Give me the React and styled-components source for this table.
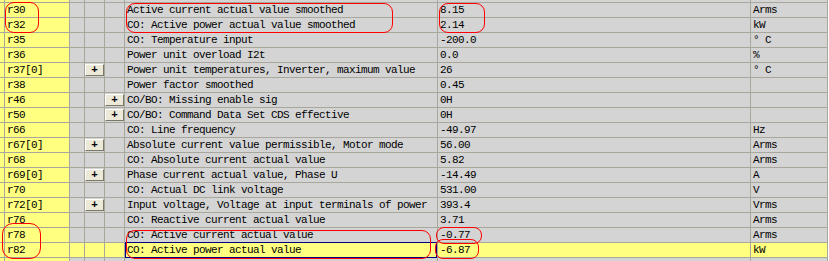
import React from "react";
import styled, { createGlobalStyle, css } from "styled-components";

const GlobalStyle = createGlobalStyle`
  html, body {
    margin: 0;
    padding: 0;
    background: #ffffff;
    overflow: hidden;
  }
`;

const YELLOW = "#ffff80";
const GREY = "#d4d4d4";
const LINE = "#a8a79c";

const rows = [
  { id: "", desc: "", value: "", unit: "" },
  { id: "r30", desc: "Active current actual value smoothed", value: "8.15", unit: "Arms" },
  { id: "r32", desc: "CO: Active power actual value smoothed", value: "2.14", unit: "kW" },
  { id: "r35", desc: "CO: Temperature input", value: "-200.0", unit: "° C" },
  { id: "r36", desc: "Power unit overload I2t", value: "0.0", unit: "%" },
  { id: "r37[0]", plus: 1, desc: "Power unit temperatures, Inverter, maximum value", value: "26", unit: "° C" },
  { id: "r38", desc: "Power factor smoothed", value: "0.45", unit: "" },
  { id: "r46", plus: 2, desc: "CO/BO: Missing enable sig", value: "0H", unit: "" },
  { id: "r50", plus: 2, desc: "CO/BO: Command Data Set CDS effective", value: "0H", unit: "" },
  { id: "r66", desc: "CO: Line frequency", value: "-49.97", unit: "Hz" },
  { id: "r67[0]", plus: 1, desc: "Absolute current value permissible, Motor mode", value: "56.00", unit: "Arms" },
  { id: "r68", desc: "CO: Absolute current actual value", value: "5.82", unit: "Arms" },
  { id: "r69[0]", plus: 1, desc: "Phase current actual value, Phase U", value: "-14.49", unit: "A" },
  { id: "r70", desc: "CO: Actual DC link voltage", value: "531.00", unit: "V" },
  { id: "r72[0]", plus: 1, desc: "Input voltage, Voltage at input terminals of power", value: "393.4", unit: "Vrms" },
  { id: "r76", desc: "CO: Reactive current actual value", value: "3.71", unit: "Arms" },
  { id: "r78", desc: "CO: Active current actual value", value: "-0.77", unit: "Arms" },
  { id: "r82", desc: "CO: Active power actual value", value: "-6.87", unit: "kW", selected: true },
  { id: "", desc: "", value: "", unit: "" },
];

const marks = [
  { x: 5, y: 2, w: 34, h: 31, r: 9 },
  { x: 126, y: 3, w: 267, h: 30, r: 9 },
  { x: 439, y: 3, w: 46, h: 30, r: 9 },
  { x: 2, y: 223, w: 39, h: 36, r: 11 },
  { x: 126, y: 230, w: 305, h: 29, r: 9 },
  { x: 436, y: 227, w: 46, h: 17, r: 8 },
  { x: 435, y: 239, w: 44, h: 20, r: 8 },
];

export default function App() {
  return (
    <>
      <GlobalStyle />
      <Frame>
        <Table>
          {rows.map((row, i) => (
            <Row key={i}>
              <Cell $yellow />
              <Cell $yellow>{row.id}</Cell>
              <Cell $yellow={row.selected} />
              <Cell $yellow={row.selected} $button>
                {row.plus === 1 && <PlusButton>+</PlusButton>}
              </Cell>
              <Cell $yellow={row.selected} $button>
                {row.plus === 2 && <PlusButton>+</PlusButton>}
              </Cell>
              <Cell $yellow={row.selected} $focused={row.selected}>
                {row.desc}
              </Cell>
              <Cell $yellow={row.selected}>{row.value}</Cell>
              <Cell $yellow={row.selected}>{row.unit}</Cell>
            </Row>
          ))}
        </Table>
        {marks.map((m, i) => (
          <Mark key={i} $x={m.x} $y={m.y} $w={m.w} $h={m.h} $r={m.r} />
        ))}
      </Frame>
    </>
  );
}

const Frame = styled.div`
  position: relative;
  width: 829px;
  height: 261px;
  overflow: hidden;
  background: #ffffff;
`;

const Table = styled.div`
  display: flex;
  flex-direction: column;
  margin-top: -12px;
`;

const Row = styled.div`
  display: grid;
  grid-template-columns: 4px 64px 14px 19px 19px 312px 312px 76px;
  column-gap: 1px;
  width: max-content;
  padding-bottom: 1px;
  background: ${LINE};
  border-right: 1px solid ${LINE};
`;

const Cell = styled.div`
  height: 14px;
  box-sizing: border-box;
  padding: 1px 0 0 2px;
  background: ${(p) => (p.$yellow ? YELLOW : GREY)};
  color: #000000;
  font-family: "Liberation Mono", "DejaVu Sans Mono", monospace;
  font-size: 11px;
  letter-spacing: -0.6px;
  line-height: 13px;
  white-space: nowrap;
  overflow: visible;
  ${(p) =>
    p.$button &&
    css`
      padding: 1px 0 0 0;
    `}
  ${(p) =>
    p.$focused &&
    css`
      box-shadow: inset 1px 0 #000080, inset -1px 0 #000080, 0 -1px #000080,
        0 1px #000080;
    `}
`;

const PlusButton = styled.button`
  display: flex;
  align-items: center;
  justify-content: center;
  width: 100%;
  height: 12px;
  margin: 0;
  padding: 0 0 1px 0;
  box-sizing: border-box;
  background: #ece9d8;
  border: 1px solid;
  border-color: #ffffff #7a7868 #7a7868 #ffffff;
  color: #000000;
  font-family: "Liberation Mono", monospace;
  font-size: 11px;
  font-weight: bold;
  line-height: 10px;
`;

const Mark = styled.div`
  position: absolute;
  left: ${(p) => p.$x}px;
  top: ${(p) => p.$y}px;
  width: ${(p) => p.$w}px;
  height: ${(p) => p.$h}px;
  box-sizing: border-box;
  border: 1px solid #ff0000;
  border-radius: ${(p) => p.$r}px;
  pointer-events: none;
`;
